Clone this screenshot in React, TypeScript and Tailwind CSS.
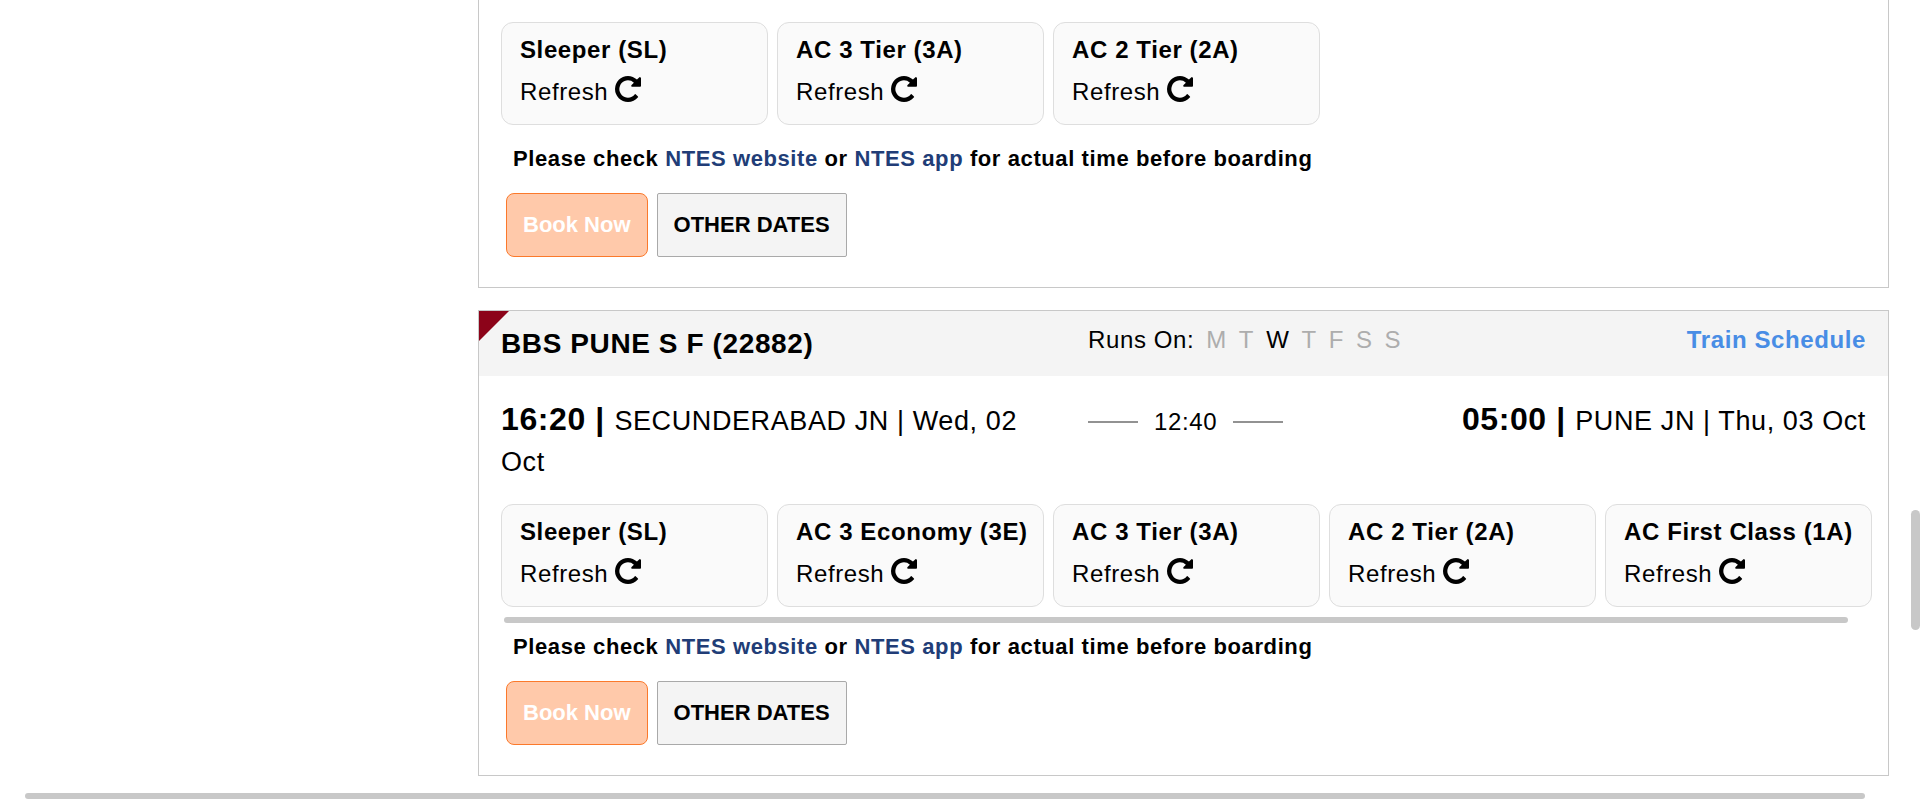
import React from "react";

type TravelClass = { name: string };

const DAYS = ["M", "T", "W", "T", "F", "S", "S"];

const FIRST_CLASSES: TravelClass[] = [
  { name: "Sleeper (SL)" },
  { name: "AC 3 Tier (3A)" },
  { name: "AC 2 Tier (2A)" },
];

const SECOND_CLASSES: TravelClass[] = [
  { name: "Sleeper (SL)" },
  { name: "AC 3 Economy (3E)" },
  { name: "AC 3 Tier (3A)" },
  { name: "AC 2 Tier (2A)" },
  { name: "AC First Class (1A)" },
];

function RepeatIcon() {
  return (
    <svg viewBox="0 0 1536 1536" className="h-[26px] w-[26px] fill-black" aria-hidden="true">
      <path d="M1536 128v448q0 26-19 45t-45 19h-448q-42 0-59-40-17-39 14-69l138-138q-148-137-349-137-104 0-198.5 40.500t-163.500 109.500-109.500 163.500-40.500 198.500 40.500 198.500 109.500 163.500 163.500 109.500 198.500 40.500q119 0 225-52t179-147q7-10 23-12 15 0 25 9l137 138q9 8 9.500 20.500t-7.500 22.500q-109 132-264 204.500t-327 72.500q-156 0-298-61t-245-164-164-245-61-298 61-298 164-245 245-164 298-61q147 0 284.500 55.500t244.500 156.500l130-129q29-31 70-14 39 17 39 59z" />
    </svg>
  );
}

function ClassList({ classes }: { classes: TravelClass[] }) {
  return (
    <ul className="flex gap-[9px]">
      {classes.map((item) => (
        <li
          key={item.name}
          className="h-[103px] w-[267px] shrink-0 rounded-xl border border-[#dedede] bg-[#fafafa] px-[18px] pt-2"
        >
          <strong className="block whitespace-nowrap leading-[38px]">{item.name}</strong>
          <button type="button" className="flex items-center gap-[7px] leading-[46px] tracking-wide">
            <span>Refresh</span>
            <span className="pb-[6px]">
              <RepeatIcon />
            </span>
          </button>
        </li>
      ))}
    </ul>
  );
}

function CardFooter() {
  return (
    <>
      <p className="px-3 text-[22px] font-bold leading-9">
        Please check{" "}
        <a href="#ntes-website" className="text-[#213d77]">
          NTES website
        </a>{" "}
        or{" "}
        <a href="#ntes-app" className="text-[#213d77]">
          NTES app
        </a>{" "}
        for actual time before boarding
      </p>
      <div className="flex gap-[9px] px-[5px] pb-[30px] pt-4 text-[22px] font-bold">
        <button
          type="button"
          disabled
          className="h-16 rounded-lg border border-[#fb792b] bg-[#ffc9aa] px-4 tracking-normal text-white"
        >
          Book Now
        </button>
        <button
          type="button"
          className="h-16 rounded-[2px] border border-[#a9a9a9] bg-[#f4f4f4] px-4 tracking-normal"
        >
          OTHER DATES
        </button>
      </div>
    </>
  );
}

function Duration({ value }: { value: string }) {
  return (
    <div className="flex items-center gap-4 whitespace-nowrap leading-[41px]">
      <span className="h-[2px] w-[50px] bg-[#929292]" />
      <span>{value}</span>
      <span className="h-[2px] w-[50px] bg-[#929292]" />
    </div>
  );
}

export default function App() {
  return (
    <div
      className="relative overflow-hidden bg-white text-2xl tracking-wide text-black"
      style={{ fontFamily: '"Liberation Sans", Arial, sans-serif' }}
    >
      <main className="flex flex-col gap-[22px] pl-[478px] pr-[31px]">
        <article className="border border-t-0 border-[#c8c8c8] px-[22px] pt-[22px]">
          <ClassList classes={FIRST_CLASSES} />
          <div className="pt-4">
            <CardFooter />
          </div>
        </article>

        <article className="relative border border-[#c8c8c8]">
          <svg viewBox="0 0 30 30" className="absolute left-0 top-0 h-[30px] w-[30px] fill-[#8c0319]" aria-hidden="true">
            <path d="M0 0H30L0 30Z" />
          </svg>
          <header className="grid h-[65px] grid-cols-12 bg-[#f4f4f4]">
            <h2 className="col-span-5 px-[22px] pt-[13px] text-[28px] font-bold leading-10">
              BBS PUNE S F (22882)
            </h2>
            <div className="col-span-4 flex gap-3 whitespace-nowrap px-[22px] pt-[11px] leading-9">
              <span>Runs On:</span>
              <span className="flex gap-3">
                {DAYS.map((day, index) => (
                  <span key={index} className={index === 2 ? "text-black" : "text-[#adadad]"}>
                    {day}
                  </span>
                ))}
              </span>
            </div>
            <div className="col-span-3 px-[22px] pt-[11px] text-right leading-9">
              <a href="#schedule" className="font-bold text-[#488de5]">
                Train Schedule
              </a>
            </div>
          </header>

          <div className="grid grid-cols-12 pb-[21px] pt-[25px] text-[27px] leading-[41px]">
            <p className="col-span-5 px-[22px]">
              <strong className="text-[32px] leading-none">16:20 | </strong>SECUNDERABAD JN | Wed, 02 Oct
            </p>
            <div className="col-span-3 px-[22px] text-2xl">
              <Duration value="12:40" />
            </div>
            <p className="col-span-4 px-[22px] text-right">
              <strong className="text-[32px] leading-none">05:00 | </strong>PUNE JN | Thu, 03 Oct
            </p>
          </div>

          <div className="px-[22px]">
            <ClassList classes={SECOND_CLASSES} />
            <div className="ml-[3px] mr-[18px] mt-[10px] h-[6px] rounded-full bg-[#c8c8c8]" />
            <div className="pt-[6px]">
              <CardFooter />
            </div>
          </div>
        </article>
      </main>

      <div className="ml-[25px] mr-[55px] mt-[17px] h-[6px] rounded-full bg-[#c8c8c8]" />
      <div className="absolute right-0 top-[510px] h-[120px] w-[9px] rounded-full bg-[#c8c8c8]" />
    </div>
  );
}
